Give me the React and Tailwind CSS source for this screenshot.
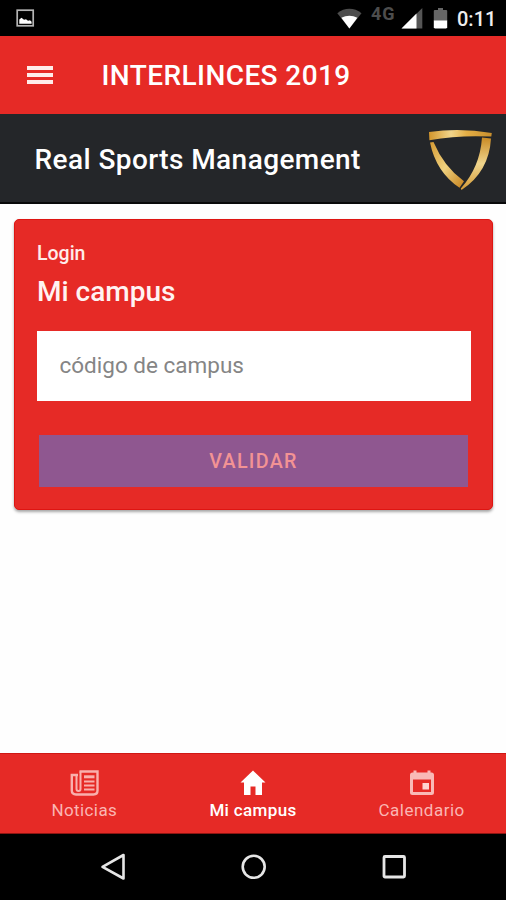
function StatusBar() {
  return (
    <div className="flex h-9 shrink-0 items-start bg-black">
      <svg className="ml-[16px] mt-[9px]" width="19" height="18" viewBox="0 0 19 18">
        <rect x="1.2" y="1.2" width="16" height="15.6" fill="none" stroke="#b4b4b4" strokeWidth="1.7" />
        <path d="M3.3 14.8V10.5L5.5 8.800L8 10.8L10 10.2L12 11.8L14 11.2L15.6 12.8V14.8Z" fill="#fff" />
      </svg>
      <svg className="ml-[302px] mt-[8px]" width="25" height="21" viewBox="0 0 25 21">
        <path d="M0.3 5.2C7.5-0.6 17.3-0.6 24.5 5.2L12.4 20.6Z" fill="#4d4d4d" />
        <path d="M4.300 9.800C9.500 7 15.3 7 20.400 9.800L12.4 20.4Z" fill="#fff" />
      </svg>
      <span className="ml-[9px] mt-[5px] w-[25px] text-[18px] font-bold leading-[17px] tracking-[0.8px] text-[#4d4d4d]">4G</span>
      <svg className="ml-[5px] mt-[8px]" width="22" height="21" viewBox="0 0 22 21">
        <path d="M0.5 20.5L21.3 0V20.5Z" fill="#555" />
        <path d="M0.5 20.5L15.5 5.5V20.5Z" fill="#fff" />
      </svg>
      <svg className="ml-[10px] mt-[8px]" width="15" height="21" viewBox="0 0 15 21">
        <path d="M1.5 2H5V0H10V2H13.5L14.2 2.7V13H0.8V2.7Z" fill="#666" />
        <path d="M0.8 12.6H14.2V19.5L13.2 20.4H1.8L0.8 19.5Z" fill="#fff" />
      </svg>
      <span className="ml-[9px] mt-[9px] text-[20px] font-medium leading-[20px] text-[#ededed]">0:11</span>
    </div>
  );
}

function Header() {
  return (
    <header className="flex h-[78px] shrink-0 items-center bg-[#e62a26]">
      <div className="ml-[27px] flex w-[26px] flex-col gap-[3px]">
        <span className="h-[4px] bg-[#ffecea]" />
        <span className="h-[4px] bg-[#ffecea]" />
        <span className="h-[4px] bg-[#ffecea]" />
      </div>
      <h1 className="ml-[48.5px] mt-[1px] text-[28px] font-medium leading-[28px] tracking-[0.42px] text-white">INTERLINCES 2019</h1>
    </header>
  );
}

function Logo() {
  return (
    <svg className="mr-[13px] mt-[4px]" width="66" height="62" viewBox="0 0 66 62">
      <defs>
        <linearGradient id="bar" x1="0" y1="0" x2="1" y2="0">
          <stop offset="0" stopColor="#d3962c" />
          <stop offset="0.35" stopColor="#f1d58b" />
          <stop offset="0.6" stopColor="#e3ae45" />
          <stop offset="1" stopColor="#c98f2d" />
        </linearGradient>
        <linearGradient id="left" x1="0" y1="0" x2="1" y2="1">
          <stop offset="0" stopColor="#d59a32" />
          <stop offset="0.5" stopColor="#efd17f" />
          <stop offset="1" stopColor="#c5811c" />
        </linearGradient>
        <linearGradient id="right" x1="0" y1="0" x2="0" y2="1">
          <stop offset="0" stopColor="#c98a24" />
          <stop offset="0.5" stopColor="#efd58d" />
          <stop offset="1" stopColor="#d39a37" />
        </linearGradient>
      </defs>
      <path d="M2 3Q33-1.5 64.800 4L64.300 7.600Q33 5.800 2.400 11.200Z" fill="url(#bar)" />
      <path d="M3 13.500L6.500 13Q17 38 37 52.200L32.500 58.800Q9 43 3 13.500Z" fill="url(#left)" />
      <path d="M55 8.500L64 9.500Q62 43 34.500 61L33.800 59.500Q53 38 55 8.500Z" fill="url(#right)" />
    </svg>
  );
}

function Banner() {
  return (
    <section className="flex h-[90px] shrink-0 items-center justify-between border-b-2 border-[#08090a] bg-[#242629]">
      <h2 className="ml-[34.5px] mt-[3px] text-[28px] font-medium leading-[28px] tracking-[0.42px] text-white">Real Sports Management</h2>
      <Logo />
    </section>
  );
}

function LoginCard() {
  return (
    <section className="ml-[14px] mr-[13px] mt-[15px] flex h-[291px] shrink-0 flex-col rounded-[5px] border border-[#de1512] bg-[#e62a26] pl-[22px] pr-[21px] pt-[24px] shadow-[0_2px_3px_rgba(0,0,0,0.35)]">
      <p className="text-[19.5px] font-medium leading-[20px] text-[#ffecea]">Login</p>
      <h3 className="mt-[14px] text-[28px] font-medium leading-[28px] text-[#fff3f2]">Mi campus</h3>
      <input
        className="mt-[25px] h-[70px] w-[434px] bg-white px-[22.5px] pb-[3px] text-[22.5px] text-[#858585] outline-none placeholder:text-[#858585] placeholder:opacity-100"
        placeholder="código de campus"
      />
      <button className="ml-[2px] mt-[34px] h-[52px] w-[429px] bg-[#8f5790] pt-[2px] text-[19.7px] font-medium tracking-[1.3px] text-[#f39394]" disabled>
        VALIDAR
      </button>
    </section>
  );
}

function NewsIcon() {
  return (
    <svg className="ml-[2px]" width="30" height="26" viewBox="0 0 30 26" fill="none" stroke="#f9b0ad" strokeWidth="2.400">
      <path d="M9.500 1.500H27.500V20.500Q27.500 24.500 23.500 24.500H6Q1.800 24.500 1.800 20.500V5H8" />
      <path d="M10.500 1.500V19Q10.500 21 8.500 21T6.500 19V5" strokeWidth="2" />
      <path d="M14 6.800H24.500" strokeWidth="3" />
      <path d="M14 11.500H24.500M14 15.500H24.500M14 19.500H24.500" strokeWidth="2" />
    </svg>
  );
}

function HomeIcon() {
  return (
    <svg width="26" height="26" viewBox="0 0 26 26" fill="#fff">
      <path d="M13 0.500L0.500 12.500H4V25H10.500V16.500H15.500V25H22V12.500H25.500Z" />
    </svg>
  );
}

function CalendarIcon() {
  return (
    <svg width="26" height="26" viewBox="0 0 26 26">
      <path fill="#f9b9b6" fillRule="evenodd" d="M4.500 0.500H7.500V2.500H18.500V0.500H21.500V2.500H22.500Q25 2.500 25 5V22.500Q25 25 22.500 25H3.500Q1 25 1 22.500V5Q1 2.500 3.500 2.500H4.500ZM4 9.500V22H22V9.500Z" />
      <path fill="#ffd3d0" d="M13.500 13H20V19.500H13.500Z" />
    </svg>
  );
}

function Tabs() {
  return (
    <nav className="grid h-[81px] shrink-0 grid-cols-3 border-b border-t border-b-[#8d1512] border-t-[#cf1714] bg-[#e62a26] pt-[16px] text-[17px] leading-[20px]">
      <div className="flex flex-col items-center gap-[4px] text-[#fab6b3]">
        <NewsIcon />
        <span className="tracking-[0.4px]">Noticias</span>
      </div>
      <div className="flex flex-col items-center gap-[4px] font-medium text-white">
        <HomeIcon />
        <span className="tracking-[0.35px]">Mi campus</span>
      </div>
      <div className="flex flex-col items-center gap-[4px] text-[#fab6b3]">
        <CalendarIcon />
        <span className="tracking-[0.5px]">Calendario</span>
      </div>
    </nav>
  );
}

function SystemNav() {
  return (
    <div className="flex h-[66px] shrink-0 items-start bg-black pt-[18px]">
      <svg className="ml-[100px]" width="26" height="30" viewBox="0 0 26 30">
        <path d="M23.500 3V26.500L2.500 14.800Z" fill="none" stroke="#e6e6e6" strokeWidth="2.600" strokeLinejoin="round" />
      </svg>
      <svg className="ml-[113px]" width="28" height="30" viewBox="0 0 28 30">
        <circle cx="14.700" cy="14.800" r="11" fill="none" stroke="#e6e6e6" strokeWidth="2.600" />
      </svg>
      <svg className="ml-[114px]" width="28" height="30" viewBox="0 0 28 30">
        <rect x="3" y="4.500" width="20.500" height="20.500" rx="1" fill="none" stroke="#e6e6e6" strokeWidth="2.800" />
      </svg>
    </div>
  );
}

export default function App() {
  return (
    <main className="flex h-[900px] w-[506px] flex-col overflow-hidden bg-[#fefefe] font-['Roboto',sans-serif]">
      <StatusBar />
      <Header />
      <Banner />
      <LoginCard />
      <div className="flex-1" />
      <Tabs />
      <SystemNav />
    </main>
  );
}
